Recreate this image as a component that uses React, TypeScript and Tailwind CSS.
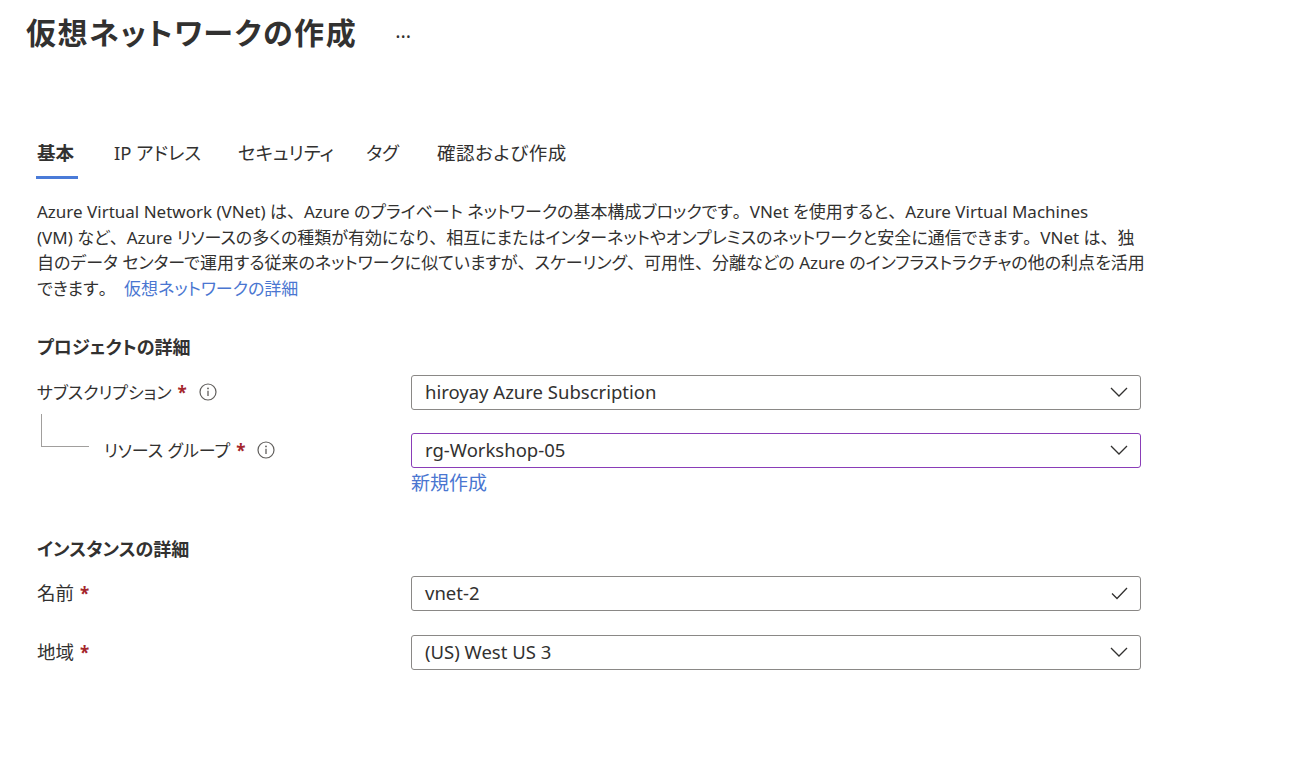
import React from "react";

const font = {
  fontFamily: '"Noto Sans", "Noto Sans CJK JP", sans-serif',
};

function J({ t }: { t: string }) {
  const parts = t.split(/([、。])/);
  return (
    <>
      {parts.map((p, i) =>
        p === "、" || p === "。" ? (
          <span key={i} className="[font-feature-settings:normal]">
            {p}
          </span>
        ) : (
          <React.Fragment key={i}>{p}</React.Fragment>
        )
      )}
    </>
  );
}

function Chevron() {
  return (
    <svg width="18" height="10" viewBox="0 0 18 10" fill="none">
      <polyline points="1,1 9,9 17,1" stroke="#323130" strokeWidth="1.3" />
    </svg>
  );
}

function Check() {
  return (
    <svg width="17" height="13" viewBox="0 0 17 13" fill="none">
      <polyline points="1,6.5 6,11.5 16,1" stroke="#323130" strokeWidth="1.3" />
    </svg>
  );
}

function Info() {
  return (
    <svg width="18" height="18" viewBox="0 0 18 18" fill="none">
      <circle cx="9" cy="9" r="8" stroke="#605e5c" strokeWidth="1.2" />
      <circle cx="9" cy="5.4" r="0.9" fill="#605e5c" />
      <line x1="9" y1="7.8" x2="9" y2="13" stroke="#605e5c" strokeWidth="1.3" />
    </svg>
  );
}

function Star() {
  return <span className="text-[#a4262c] font-bold ml-[6px] text-[17px]">*</span>;
}

function Field({
  value,
  border = "border-[#8a8886]",
  icon = "chevron",
}: {
  value: string;
  border?: string;
  icon?: "chevron" | "check";
}) {
  return (
    <div
      className={`w-[730px] h-[35px] border ${border} rounded-[3px] flex items-center justify-between pl-[13px] pr-[12px]`}
    >
      <span className="text-[18.5px]">{value}</span>
      {icon === "chevron" ? <Chevron /> : <Check />}
    </div>
  );
}

export default function App() {
  return (
    <div
      className="w-[1297px] h-[772px] bg-white text-[#323130] [font-feature-settings:'palt']"
      style={font}
    >
      <div className="pl-[26px] pt-[13px] flex items-center">
        <h1 className="text-[30px] leading-[40px] font-semibold tracking-[1.6px]">仮想ネットワークの作成</h1>
        <span className="ml-[38px] text-[20px] text-[#323130] mt-[-4px]">…</span>
      </div>

      <div className="pl-[37px] mt-[86px] flex text-[18.5px] leading-[28px]">
        <div className="w-[77px] flex flex-col items-start">
          <span className="font-semibold">基本</span>
          <div className="mt-[9px] h-[3px] w-[42px] -ml-[1px] bg-[#4a7bd8]" />
        </div>
        <div className="w-[124px]">IP アドレス</div>
        <div className="w-[128px]">セキュリティ</div>
        <div className="w-[71px]">タグ</div>
        <div className="tracking-[0.6px]">確認および作成</div>
      </div>

      <div className="pl-[37px] mt-[20px] text-[17px] leading-[25.7px] whitespace-nowrap">
        <div><J t="Azure Virtual Network (VNet) は、Azure のプライベート ネットワークの基本構成ブロックです。VNet を使用すると、Azure Virtual Machines" /></div>
        <div><J t="(VM) など、Azure リソースの多くの種類が有効になり、相互にまたはインターネットやオンプレミスのネットワークと安全に通信できます。VNet は、独" /></div>
        <div><J t="自のデータ センターで運用する従来のネットワークに似ていますが、スケーリング、可用性、分離などの Azure のインフラストラクチャの他の利点を活用" /></div>
        <div>
          <J t="できます。" /> <span className="ml-[4px] text-[#4a76d1]">仮想ネットワークの詳細</span>
        </div>
      </div>

      <div className="pl-[37px]">
        <h2 className="mt-[33px] text-[18px] leading-[24px] font-semibold">プロジェクトの詳細</h2>

        <div className="mt-[16px] flex items-center">
          <div className="w-[374px] flex items-center text-[17px]">
            <span>サブスクリプション</span>
            <Star />
            <span className="ml-[12px] flex"><Info /></span>
          </div>
          <Field value="hiroyay Azure Subscription" />
        </div>

        <div className="mt-[23px] flex items-center">
          <div className="w-[374px] h-[35px] flex items-center text-[17px]">
            <div className="self-start mt-[-19px] ml-[4px] w-[48px] h-[33px] border-l border-b border-[#a19f9d]" />
            <span className="ml-[15px]">リソース グループ</span>
            <Star />
            <span className="ml-[12px] flex"><Info /></span>
          </div>
          <Field value="rg-Workshop-05" border="border-[#8a3db8]" />
        </div>
        <div className="ml-[374px] mt-[4px] text-[19px] leading-[22px] text-[#4a76d1]">新規作成</div>

        <h2 className="mt-[43px] text-[18px] leading-[24px] font-semibold">インスタンスの詳細</h2>

        <div className="mt-[15px] flex items-center">
          <div className="w-[374px] flex items-center text-[18.5px]">
            <span>名前</span>
            <Star />
          </div>
          <Field value="vnet-2" icon="check" />
        </div>

        <div className="mt-[24px] flex items-center">
          <div className="w-[374px] flex items-center text-[18.5px]">
            <span>地域</span>
            <Star />
          </div>
          <Field value="(US) West US 3" />
        </div>
      </div>
    </div>
  );
}
